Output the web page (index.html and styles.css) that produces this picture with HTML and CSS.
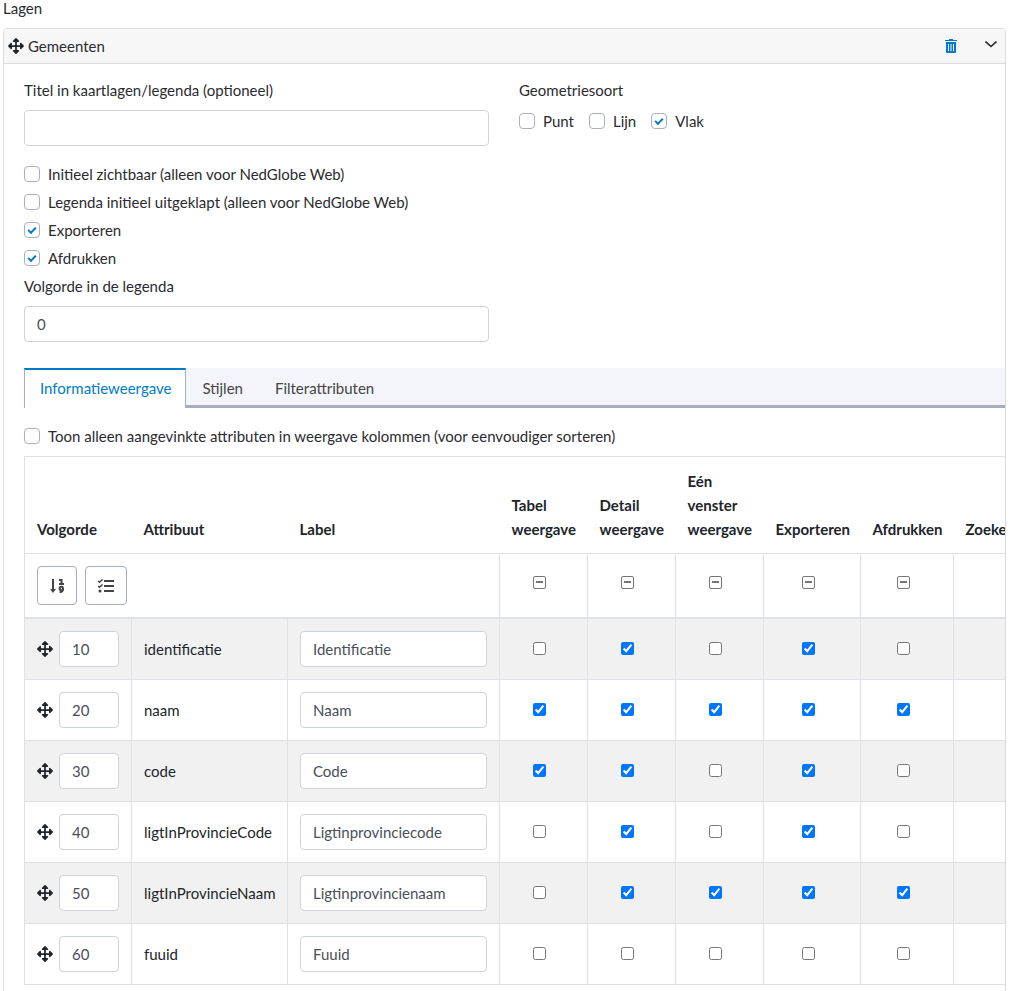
FILE: index.html
```html
<!DOCTYPE html>
<html lang="nl">
<head>
<meta charset="utf-8">
<title>Lagen</title>
<link rel="stylesheet" href="styles.css">
</head>
<body>
<svg class="sprite" aria-hidden="true">
  <symbol id="move" viewBox="0 0 512 512"><path d="M352.201 425.775l-79.196 79.196c-9.373 9.373-24.568 9.373-33.941 0l-79.196-79.196c-15.119-15.119-4.411-40.971 16.971-40.970h51.162L228 284H127.196v51.162c0 21.382-25.851 32.090-40.971 16.971L7.029 272.937c-9.373-9.373-9.373-24.569 0-33.941L86.225 159.800c15.119-15.119 40.971-4.411 40.971 16.971V228H228V127.196h-51.230c-21.382 0-32.090-25.851-16.971-40.971l79.196-79.196c9.373-9.373 24.568-9.373 33.941 0l79.196 79.196c15.119 15.119 4.411 40.971-16.971 40.971h-51.162V228h100.804v-51.162c0-21.382 25.851-32.090 40.970-16.971l79.196 79.196c9.373 9.373 9.373 24.569 0 33.941L425.773 352.200c-15.119 15.119-40.971 4.411-40.970-16.971V284H284v100.804h51.230c21.382 0 32.090 25.851 16.971 40.971z"/></symbol>
</svg>
<main class="page">
  <h1 class="title">Lagen</h1>
  <section class="card">
    <header class="card-header">
      <svg class="move"><use href="#move"/></svg>
      <span class="card-name">Gemeenten</span>
      <button class="icon-button trash" type="button" aria-label="Verwijderen">
        <svg width="12" height="14" viewBox="0 0 12 14"><path fill="currentColor" fill-rule="evenodd" d="M4 0h4v1h4v1H0V1h4zM1 3h10v10a1 1 0 0 1-1 1H2a1 1 0 0 1-1-1zm2 2v7h1V5zm2.500 0v7h1V5zM8 5v7h1V5z"/></svg>
      </button>
      <button class="icon-button chevron" type="button" aria-label="Inklappen">
        <svg width="12" height="7" viewBox="0 0 12 7"><path fill="none" stroke="currentColor" stroke-width="1.600" d="M.5.500L6 5.500 11.500.500"/></svg>
      </button>
    </header>
    <div class="card-body">
      <div class="form-row">
        <div class="form-column">
          <label class="label" for="titel">Titel in kaartlagen/legenda (optioneel)</label>
          <input class="field" id="titel" type="text">
          <div class="checks">
            <label class="check"><input type="checkbox">Initieel zichtbaar (alleen voor NedGlobe Web)</label>
            <label class="check"><input type="checkbox">Legenda initieel uitgeklapt (alleen voor NedGlobe Web)</label>
            <label class="check"><input type="checkbox" checked>Exporteren</label>
            <label class="check"><input type="checkbox" checked>Afdrukken</label>
          </div>
          <label class="label" for="volgorde">Volgorde in de legenda</label>
          <input class="field" id="volgorde" type="text" value="0">
        </div>
        <fieldset class="form-column geometry">
          <legend class="label">Geometriesoort</legend>
          <div class="inline-checks">
            <label class="check"><input type="checkbox">Punt</label>
            <label class="check"><input type="checkbox">Lijn</label>
            <label class="check"><input type="checkbox" checked>Vlak</label>
          </div>
        </fieldset>
      </div>
      <nav class="tabs">
        <button class="tab active" type="button">Informatieweergave</button>
        <button class="tab" type="button">Stijlen</button>
        <button class="tab" type="button">Filterattributen</button>
      </nav>
      <label class="check only-checked"><input type="checkbox">Toon alleen aangevinkte attributen in weergave kolommen (voor eenvoudiger sorteren)</label>
      <table class="grid">
        <colgroup><col class="c-order"><col class="c-attribute"><col class="c-label"><col class="c-view"><col class="c-view"><col class="c-view"><col class="c-export"><col class="c-print"><col class="c-search"></colgroup>
        <thead>
          <tr class="heads"><th>Volgorde</th><th>Attribuut</th><th>Label</th><th>Tabel weergave</th><th>Detail weergave</th><th>Eén venster weergave</th><th>Exporteren</th><th>Afdrukken</th><th>Zoeken</th></tr>
          <tr class="tools">
            <td colspan="3">
              <div class="buttons">
                <button class="tool sort" type="button" aria-label="Sorteren op volgorde">
                  <svg width="14" height="14" viewBox="0 0 14 14" fill="none" stroke="currentColor"><path stroke-width="2" d="M3 0v11"/><path fill="currentColor" stroke="none" d="M0 10h6l-3 4z"/><path stroke-width="2" d="M9 1h2.500v4M9 5h5"/><path stroke-width="1.800" d="M13 10c0 2.200-1 3.200-3.500 3.200"/><circle cx="11.300" cy="9.500" r="1.700" stroke-width="2"/></svg>
                </button>
                <button class="tool list" type="button" aria-label="Selectie">
                  <svg width="16" height="14" viewBox="0 0 16 14" fill="none" stroke="currentColor"><path stroke-width="2" d="M6 2h10M6 7h10M6 12h10"/><path stroke-width="1.500" d="M0 2l1.500 1.300L4.500.500M0 7l1.500 1.300 3-2.800"/><circle cx="2" cy="12" r="1.500" fill="currentColor" stroke="none"/></svg>
                </button>
              </div>
            </td>
            <td class="tick"><input type="checkbox" data-partial aria-label="Alles: tabel"></td>
            <td class="tick"><input type="checkbox" data-partial aria-label="Alles: detail"></td>
            <td class="tick"><input type="checkbox" data-partial aria-label="Alles: venster"></td>
            <td class="tick"><input type="checkbox" data-partial aria-label="Alles: exporteren"></td>
            <td class="tick"><input type="checkbox" data-partial aria-label="Alles: afdrukken"></td>
            <td></td>
          </tr>
        </thead>
        <tbody id="attributes"></tbody>
      </table>
    </div>
  </section>
</main>
<script src="script.js"></script>
</body>
</html>
```
FILE: script.js
```js
const attributes = [
  [10, "identificatie", "Identificatie", "01010"],
  [20, "naam", "Naam", "11111"],
  [30, "code", "Code", "11010"],
  [40, "ligtInProvincieCode", "Ligtinprovinciecode", "01010"],
  [50, "ligtInProvincieNaam", "Ligtinprovincienaam", "01111"],
  [60, "fuuid", "Fuuid", "00000"]
];
const columns = ["tabel", "detail", "venster", "exporteren", "afdrukken"];

document.getElementById("attributes").innerHTML = attributes.map(([order, name, label, flags]) => `
  <tr>
    <td><div class="order"><svg class="move"><use href="#move"/></svg><input class="field" type="text" value="${order}" aria-label="Volgorde ${name}"></div></td>
    <td>${name}</td>
    <td><input class="field" type="text" value="${label}" aria-label="Label ${name}"></td>
    ${columns.map((column, i) => `<td class="tick"><input type="checkbox" aria-label="${name}: ${column}"${flags[i] === "1" ? " checked" : ""}></td>`).join("")}
    <td></td>
  </tr>`).join("");

document.querySelectorAll("[data-partial]").forEach(box => { box.indeterminate = true; });
```
FILE: styles.css
```css
* { box-sizing: border-box; }
body { margin: 0; background: #fff; color: #2b2b2f; font: 15px/24px Lato, "Open Sans", sans-serif; overflow: hidden; }
button, input { font: inherit; color: inherit; }
.sprite { display: none; }
.page { padding: 0 4px 0 3px; }
.title { margin: 0 0 12px; font-size: 15px; font-weight: 400; line-height: 16px; }
.card { border: 1px solid #dcdcdc; border-radius: 4px; overflow: hidden; }
.card-header { display: flex; align-items: center; height: 35px; padding: 0 8px 0 4px; background: #f7f7f7; border-bottom: 1px solid #dcdcdc; }
.move { display: block; flex: none; width: 16px; height: 16px; fill: #212529; }
.card-name { flex: 1; margin-left: 4px; }
.icon-button { display: flex; padding: 0; border: 0; background: none; }
.trash { margin-right: 28px; color: #007ac9; }
.chevron { padding-bottom: 3px; }
.card-body { padding: 14px 0 20px 20px; }
.form-row { display: grid; grid-template-columns: 1fr 1fr; gap: 30px; padding-right: 21px; }
.form-column { min-width: 0; }
.geometry { margin: 0; padding: 0; border: 0; }
.label { display: block; padding: 0; }
.field { display: block; width: 100%; height: 36px; padding: 0 12px; border: 1px solid #ced4da; border-radius: 4px; background: #fff; color: #495057; }
.label + .field { margin-top: 8px; }
.checks { margin: 14px 0 2px; }
.check { display: flex; align-items: center; gap: 8px; height: 28px; }
.check input { appearance: none; flex: none; display: grid; place-items: center; width: 16px; height: 16px; margin: 0; border: 1px solid #a9afc0; border-radius: 4px; background: #fff; }
.check input:checked::before { content: ""; box-sizing: border-box; width: 8px; height: 5px; margin-top: -2px; border: solid #007ac9; border-width: 0 0 2px 2px; transform: rotate(-45deg); }
.inline-checks { display: flex; gap: 15px; margin-top: 5px; }
.tabs { display: flex; height: 40px; margin-top: 26px; background: #f4f5fa; box-shadow: inset 0 -3px #a7adbf; }
.tab { padding: 0 16px; border: 0; background: none; color: #444; }
.tab.active { padding: 0 14px 2px 15px; border: solid #a7adbf; border-width: 2px 1px 0; border-top-color: #007ac9; background: #fff; color: #007ac9; }
.only-checked { margin: 14px 0 6px; }
.grid { width: 1039px; table-layout: fixed; border-collapse: collapse; border: 1px solid #dee2e6; color: #212529; }
.c-order { width: 107px; }
.c-attribute { width: 156px; }
.c-label { width: 212px; }
.c-view { width: 88px; }
.c-export { width: 97px; }
.c-print { width: 93px; }
.c-search { width: 110px; }
.grid th, .grid td { padding: 12px; text-align: left; }
.grid th { vertical-align: bottom; font-weight: 700; }
.grid td { border: 1px solid #dee2e6; }
.grid .tools td { border-bottom: 2px solid #dee2e6; }
.grid tbody tr:nth-child(odd) { background: #f1f1f1; }
.order { display: flex; align-items: center; gap: 6px; }
.grid .tick { text-align: center; }
.tick input { margin: 3px 12px 4px 4px; }
.tick input:indeterminate { appearance: none; width: 13px; height: 13px; border: 1px solid #767676; border-radius: 2px; background: linear-gradient(#767676, #767676) center / 7px 2px no-repeat #fff; }
.buttons { display: flex; gap: 8px; }
.tool { display: flex; align-items: center; justify-content: center; height: 39px; padding: 0 12px; border: 1px solid #a7adbf; border-radius: 4px; background: #fff; color: #444; }
```
